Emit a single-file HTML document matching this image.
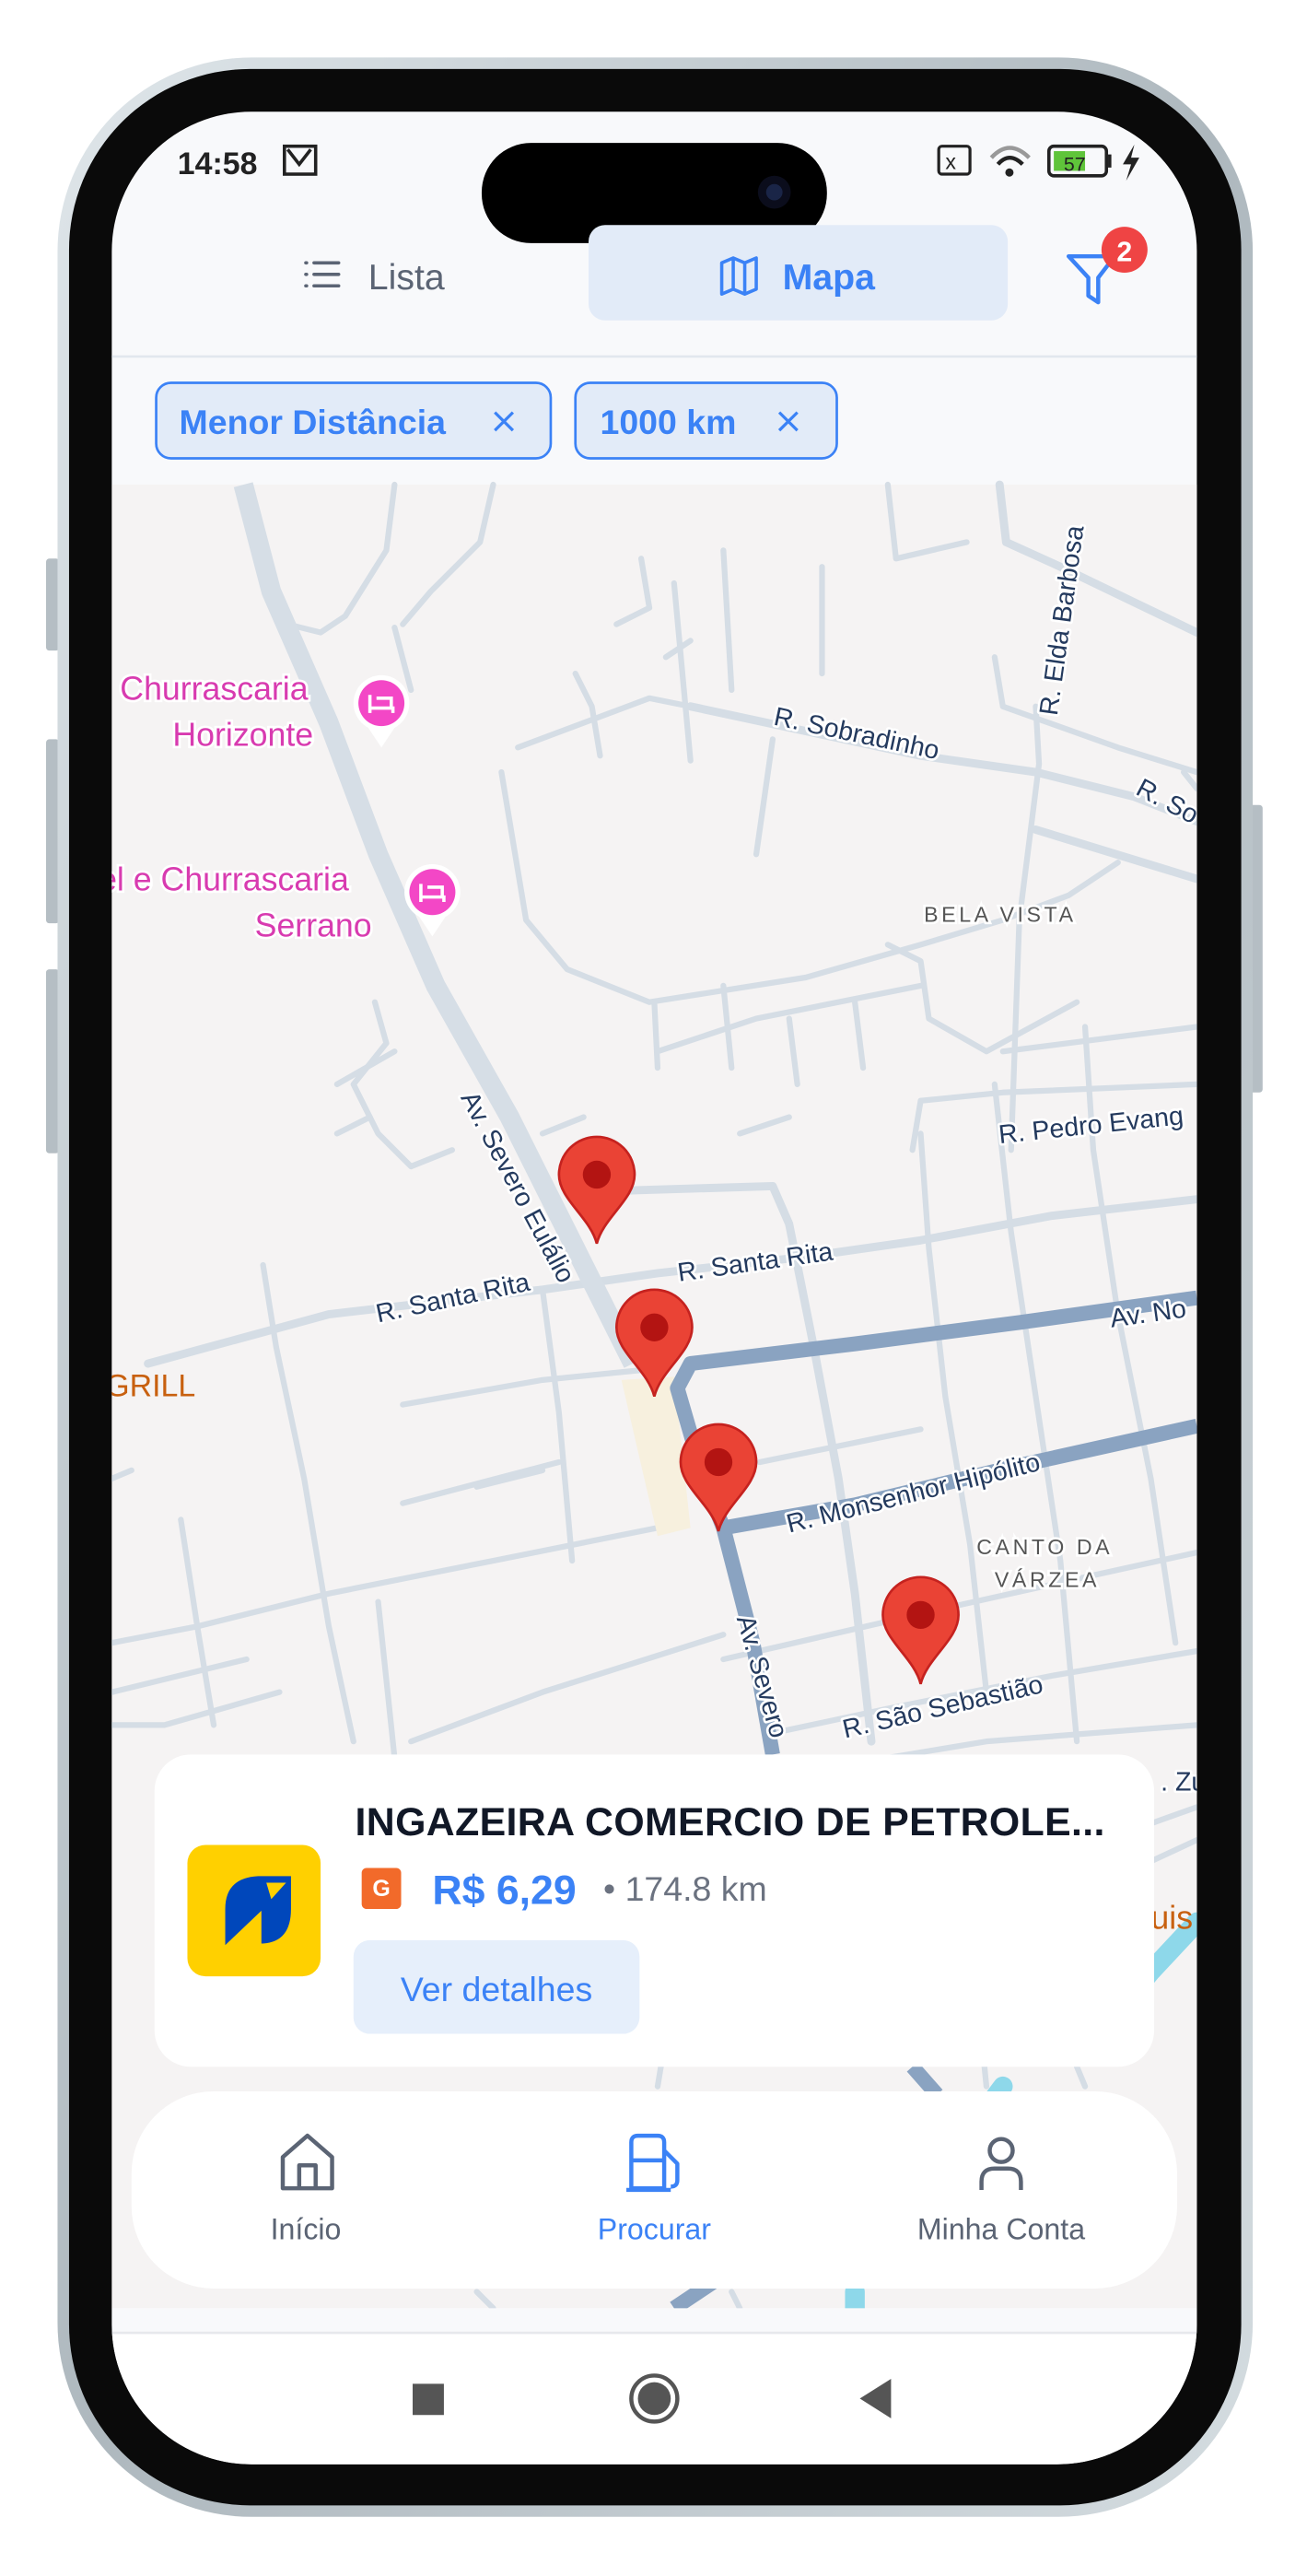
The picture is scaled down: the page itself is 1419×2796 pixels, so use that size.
<!DOCTYPE html>
<html><head><meta charset="utf-8"><style>
html,body{margin:0;padding:0;background:#fff;}
svg{display:block;}
text{font-family:"Liberation Sans",sans-serif;}
</style></head><body>
<svg width="1419" height="2796" viewBox="0 0 795 1568" preserveAspectRatio="none" xmlns="http://www.w3.org/2000/svg">
<defs>
<clipPath id="scr"><rect x="68" y="68" width="660" height="1432" rx="85"/></clipPath>
<linearGradient id="fr" x1="0" y1="0" x2="1" y2="1"><stop offset="0" stop-color="#dfe6ea"/><stop offset="0.5" stop-color="#aeb8be"/><stop offset="1" stop-color="#d4dce0"/></linearGradient>
<g id="pin"><path d="M0,0 C-4,-16 -23,-27 -23,-42 A23,23 0 1 1 23,-42 C23,-27 4,-16 0,0Z" fill="#ea4335" stroke="#c5221f" stroke-width="1.5"/><circle cx="0" cy="-42" r="8.5" fill="#b31412"/></g>
</defs>
<!-- side buttons -->
<rect x="28" y="340" width="8" height="56" rx="2" fill="#b5bec4"/>
<rect x="28" y="450" width="8" height="112" rx="2" fill="#b5bec4"/>
<rect x="28" y="590" width="8" height="112" rx="2" fill="#b5bec4"/>
<rect x="760" y="490" width="8" height="175" rx="2" fill="#b5bec4"/>
<!-- frame -->
<rect x="35" y="35" width="727" height="1497" rx="118" fill="url(#fr)"/>
<rect x="42" y="42" width="713" height="1483" rx="110" fill="#0a0a0a"/>
<rect x="68" y="68" width="660" height="1432" rx="85" fill="#f8f9fb"/>
<g clip-path="url(#scr)">
<!-- map -->
<rect x="68" y="295" width="660" height="1110" fill="#f5f3f3"/>
<g fill="none" stroke="#d5dde5" stroke-width="3.5" stroke-linecap="round" stroke-linejoin="round">
<path d="M240,295 L235,335 L210,375 L195,385 L175,380"/>
<path d="M300,295 L292,330 L262,360 L245,380"/>
<path d="M240,382 L250,420"/>
<path d="M305,470 L320,560 L345,590 L395,610 L490,595 L560,575 L610,560 L650,545 L680,525"/>
<path d="M390,340 L395,370 L375,380"/>
<path d="M410,355 L420,463 M420,390 L405,400"/>
<path d="M350,410 L360,430 L365,460"/>
<path d="M440,335 L445,420"/>
<path d="M500,345 L500,410"/>
<path d="M540,295 L545,340 M545,340 L588,330"/>
<path d="M608,295 L612,330 L645,345 L728,385" stroke-width="5"/>
<path d="M605,400 L610,430 L680,455 L728,470"/>
<path d="M420,430 L490,445 L560,460 L630,470 L690,485 L728,500" stroke-width="5"/>
<path d="M315,455 L395,425 L420,430"/>
<path d="M470,450 L460,520"/>
<path d="M630,430 L632,465 L620,560 L615,700"/>
<path d="M630,505 L728,535" stroke-width="5"/>
<path d="M720,470 L728,480"/>
<path d="M540,575 L560,585 L565,620 L600,640 L655,610"/>
<path d="M400,640 L430,630 L460,620 L560,600"/>
<path d="M440,600 L445,650 M480,620 L485,660 M520,610 L525,650 M398,610 L400,650"/>
<path d="M610,640 L728,625"/>
<path d="M228,610 L235,635 L215,660 L230,690 L250,710 L275,700"/>
<path d="M205,660 L240,640 M205,690 L225,680"/>
<path d="M330,690 L355,680 M450,690 L480,680"/>
<path d="M555,700 L560,670 L610,665 L728,660"/>
<path d="M370,725 L470,722 L480,745 L495,820 L510,900 L520,970 L530,1060" stroke-width="5"/>
<path d="M90,830 L200,800 L330,785 L400,775 L490,765 L560,755 L640,740 L728,730" stroke-width="5"/>
<path d="M560,690 L565,760 L575,850 L590,940 L600,1030"/>
<path d="M605,660 L615,750 L630,850 L645,950 L655,1060"/>
<path d="M660,625 L665,700 L680,800 L700,900 L715,1000"/>
<path d="M160,770 L168,820 L185,900 L200,990 L215,1060"/>
<path d="M245,855 L330,840 L400,833"/>
<path d="M330,785 L340,860 L348,950"/>
<path d="M68,900 L80,895 M68,1000 L120,990 L200,970 L300,950 L400,930"/>
<path d="M110,925 L120,990 L130,1050"/>
<path d="M230,975 L240,1070"/>
<path d="M245,915 L340,890 M290,905 L330,895"/>
<path d="M68,1030 L150,1010 M68,1050 L100,1050 L170,1030"/>
<path d="M250,1060 L330,1030 L440,995"/>
<path d="M462,890 L560,870"/>
<path d="M440,1010 L570,980 L660,960 L728,945"/>
<path d="M470,1055 L540,1040 L640,1020 L728,1005"/>
<path d="M480,1080 L600,1060 L728,1050"/>
<path d="M700,1110 L728,1100 M685,1140 L728,1120"/>
<path d="M600,1270 L598,1250 M400,1270 L402,1258 M660,1270 L655,1258"/>
<path d="M300,1405 L290,1395 M450,1405 L445,1395"/>
</g>
<path d="M148,295 L165,360 L200,440 L230,520 L265,600 L310,680 L350,760 L385,830" fill="none" stroke="#d6dee6" stroke-width="12" stroke-linejoin="round"/>
<path d="M378,840 L410,838 L420,930 L400,935 Z" fill="#f7f0de"/>
<g fill="none" stroke="#8aa3c1" stroke-width="9" stroke-linejoin="round" stroke-linecap="butt">
<path d="M728,790 L620,805 L520,818 L420,830 L412,845 L428,900 L440,930 L458,1000 L470,1068"/>
<path d="M440,930 L520,916 L620,892 L728,868"/>
<path d="M555,1258 L570,1275 M410,1405 L440,1385"/>
</g>
<g fill="none" stroke="#8ed8ea" stroke-width="12" stroke-linecap="round">
<path d="M728,1170 L700,1200 L690,1212"/>
<path d="M610,1270 L595,1290 M520,1405 L520,1395"/>
</g>
<!-- labels -->
<g font-size="16" fill="#243a5e" stroke="#fff" stroke-width="3" paint-order="stroke" stroke-linejoin="round">
<text x="470" y="441" transform="rotate(12 470 441)">R. Sobradinho</text>
<text x="690" y="483" transform="rotate(28 690 483)">R. So</text>
<text x="643" y="436" transform="rotate(-82 643 436)">R. Elda Barbosa</text>
<text x="608" y="696" transform="rotate(-6 608 696)">R. Pedro Evang</text>
<text x="280" y="668" transform="rotate(62 280 668)">Av. Severo Eulálio</text>
<text x="230" y="805" transform="rotate(-12 230 805)">R. Santa Rita</text>
<text x="413" y="780" transform="rotate(-8 413 780)">R. Santa Rita</text>
<text x="676" y="808" transform="rotate(-8 676 808)">Av. No</text>
<text x="480" y="933" transform="rotate(-14 480 933)">R. Monsenhor Hipólito</text>
<text x="448" y="985" transform="rotate(74 448 985)">Av. Severo</text>
<text x="514" y="1058" transform="rotate(-13 514 1058)">R. São Sebastião</text>
<text x="706" y="1090">. Zu</text>
</g>
<g font-size="13" fill="#555" letter-spacing="2" stroke="#fff" stroke-width="3" paint-order="stroke">
<text x="562" y="561">BELA VISTA</text>
<text x="594" y="946">CANTO DA</text>
<text x="605" y="966">VÁRZEA</text>
</g>
<g font-size="20" fill="#d83bb0" stroke="#fff" stroke-width="3" paint-order="stroke">
<text x="73" y="426">Churrascaria</text>
<text x="105" y="454">Horizonte</text>
<text x="60" y="542">el e Churrascaria</text>
<text x="155" y="570">Serrano</text>
</g>
<g><path d="M222,440 L232,455 L242,440 Z" fill="#fff"/><circle cx="232" cy="428" r="17" fill="#fff"/><circle cx="232" cy="428" r="14" fill="#f347c6"/><path d="M225,423 v11 M225,431 h14 v3 M229,425 h9 v5" stroke="#fff" stroke-width="2" fill="none"/></g>
<g><path d="M253,555 L263,570 L273,555 Z" fill="#fff"/><circle cx="263" cy="543" r="17" fill="#fff"/><circle cx="263" cy="543" r="14" fill="#f347c6"/><path d="M256,538 v11 M256,546 h14 v3 M260,540 h9 v5" stroke="#fff" stroke-width="2" fill="none"/></g>
<text x="64" y="850" font-size="19" fill="#c8600f">GRILL</text>
<text x="700" y="1174" font-size="20" fill="#c8600f">uis</text>
<use href="#pin" x="363" y="757"/>
<use href="#pin" x="398" y="850"/>
<use href="#pin" x="437" y="932"/>
<use href="#pin" x="560" y="1025"/>
<!-- bottom area -->
<rect x="68" y="1405" width="660" height="15" fill="#f8f9fb"/>
<rect x="68" y="1420" width="660" height="90" fill="#fff"/>
<line x1="68" y1="1420" x2="728" y2="1420" stroke="#e6e8ec" stroke-width="1.5"/>
<rect x="251" y="1451" width="19" height="19" fill="#555"/>
<circle cx="398" cy="1460" r="14" fill="none" stroke="#555" stroke-width="2.5"/><circle cx="398" cy="1460" r="10" fill="#555"/>
<path d="M542,1448 L542,1472 L523,1460 Z" fill="#555"/>
</g>
<!-- header -->
<line x1="68" y1="217" x2="728" y2="217" stroke="#e2e7ee" stroke-width="1.5"/>
<text x="108" y="106" font-size="19" font-weight="bold" fill="#222">14:58</text>
<rect x="173" y="89" width="19" height="17" fill="none" stroke="#222" stroke-width="2"/><path d="M175,91 L182,100 L189,91" fill="none" stroke="#222" stroke-width="2"/>
<rect x="571" y="89" width="19" height="17" rx="2" fill="none" stroke="#222" stroke-width="1.8"/><text x="575" y="103" font-size="13" fill="#222">x</text>
<path d="M603,96 Q614,84 626,96" fill="none" stroke="#999" stroke-width="2.5"/><path d="M607,100 Q614,92 622,100" fill="none" stroke="#222" stroke-width="2.5"/><circle cx="614" cy="105" r="2.5" fill="#222"/>
<rect x="638" y="89" width="35" height="18" rx="3" fill="none" stroke="#222" stroke-width="2"/><rect x="641" y="92" width="19" height="12" fill="#5fc43a"/><text x="647" y="104" font-size="12" fill="#222">57</text><rect x="674" y="94" width="2" height="8" fill="#222"/>
<path d="M690,88 L683,100 L688,100 L685,110 L693,96 L688,96 Z" fill="#222"/>
<rect x="293" y="87" width="210" height="61" rx="30" fill="#000"/><circle cx="471" cy="117" r="10" fill="#0b0d1c"/><circle cx="471" cy="117" r="5" fill="#1a2547"/>
<rect x="358" y="137" width="255" height="58" rx="10" fill="#e2ebf8"/>
<g stroke="#5b6474" stroke-width="2" stroke-linecap="round"><line x1="191" y1="160" x2="206" y2="160"/><line x1="191" y1="167" x2="206" y2="167"/><line x1="191" y1="174" x2="206" y2="174"/><line x1="186" y1="160" x2="186.5" y2="160"/><line x1="186" y1="167" x2="186.5" y2="167"/><line x1="186" y1="174" x2="186.5" y2="174"/></g>
<text x="224" y="176" font-size="22" fill="#5b6474">Lista</text>
<path d="M439,160 L446,157 L453,160 L460,157 L460,176 L453,179 L446,176 L439,179 Z M446,157 V176 M453,160 V179" fill="none" stroke="#3b82f6" stroke-width="2" stroke-linejoin="round"/>
<text x="476" y="176" font-size="22" fill="#3b82f6" font-weight="bold">Mapa</text>
<path d="M650,156 L678,156 L668,169 L668,184 L662,180 L662,169 Z" fill="none" stroke="#3b82f6" stroke-width="2.5" stroke-linejoin="round"/>
<circle cx="684" cy="152" r="14" fill="#ef4444"/><text x="684" y="159" font-size="17" font-weight="bold" fill="#fff" text-anchor="middle">2</text>
<rect x="95" y="233" width="240" height="46" rx="9" fill="#e2ebf8" stroke="#3b82f6" stroke-width="1.5"/>
<text x="109" y="264" font-size="21" fill="#3b82f6" font-weight="bold">Menor Distância</text>
<path d="M301,251 L312,262 M312,251 L301,262" stroke="#3b82f6" stroke-width="1.8"/>
<rect x="350" y="233" width="159" height="46" rx="9" fill="#e2ebf8" stroke="#3b82f6" stroke-width="1.5"/>
<text x="365" y="264" font-size="21" fill="#3b82f6" font-weight="bold">1000 km</text>
<path d="M474,251 L485,262 M485,251 L474,262" stroke="#3b82f6" stroke-width="1.8"/>
<!-- card -->
<rect x="94" y="1068" width="608" height="190" rx="22" fill="#fff"/>
<rect x="114" y="1123" width="81" height="80" rx="11" fill="#ffd000"/>
<path d="M137,1184 L137,1162 Q137,1143 157,1142 L177,1142 L177,1162 Q177,1182 160,1183 L159,1183 L159,1163 Z" fill="#0047bb"/>
<path d="M162,1146 L174,1146 L165,1156 Z" fill="#ffd000"/>
<text x="216" y="1117" font-size="24" fill="#111827" font-weight="bold" textLength="456">INGAZEIRA COMERCIO DE PETROLE...</text>
<rect x="220" y="1137" width="24" height="25" rx="3" fill="#f26a2a"/><text x="232" y="1154" font-size="14" fill="#fff" text-anchor="middle" font-weight="bold">G</text>
<text x="263" y="1159" font-size="25" fill="#3b82f6" font-weight="bold">R$ 6,29</text>
<text x="367" y="1157" font-size="21" fill="#6b7280">• 174.8 km</text>
<rect x="215" y="1181" width="174" height="57" rx="10" fill="#e6effb"/>
<text x="302" y="1218" font-size="21" fill="#3b82f6" text-anchor="middle">Ver detalhes</text>
<!-- bottom nav -->
<rect x="80" y="1273" width="636" height="120" rx="50" fill="#fff"/>
<path d="M172,1332 L172,1313 L187,1300 L202,1313 L202,1332 Z M182,1332 V1318 H192 V1332" fill="none" stroke="#5b6474" stroke-width="2.5" stroke-linejoin="round"/>
<text x="186" y="1363" font-size="18" fill="#5b6474" text-anchor="middle">Início</text>
<path d="M384,1332 V1304 Q384,1300 388,1300 H400 Q404,1300 404,1304 V1332 Z M381,1333 H408 M384,1315 H404 M404,1309 L412,1317 V1327 Q412,1331 408,1331" fill="none" stroke="#3b82f6" stroke-width="2.5" stroke-linejoin="round"/>
<text x="398" y="1363" font-size="18" fill="#3b82f6" text-anchor="middle">Procurar</text>
<circle cx="609" cy="1309" r="7" fill="none" stroke="#5b6474" stroke-width="2.5"/>
<path d="M597,1333 V1328 Q597,1320 605,1320 H613 Q621,1320 621,1328 V1333" fill="none" stroke="#5b6474" stroke-width="2.5"/>
<text x="609" y="1363" font-size="18" fill="#5b6474" text-anchor="middle">Minha Conta</text>
</svg>
</body></html>
